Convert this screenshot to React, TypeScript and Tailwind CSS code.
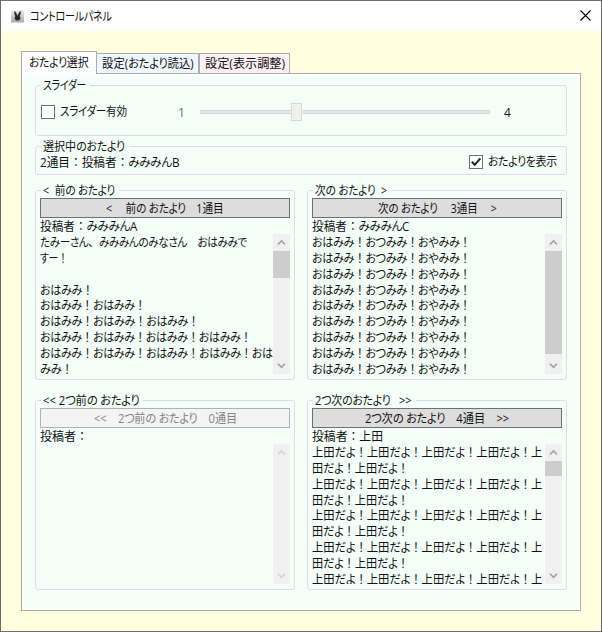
import { useLayoutEffect, useRef, type ReactNode } from 'react';

function Txt({ children, w, className = '' }: { children: string; w: number; className?: string }) {
  const inner = useRef<HTMLSpanElement>(null);
  useLayoutEffect(() => {
    const el = inner.current;
    if (el && el.offsetWidth) el.style.transform = `scaleX(${w / el.offsetWidth})`;
  }, [w]);
  const runs = children.match(/[\u3041-\u30ff]+|[^\u3041-\u30ff]+/g) ?? [];
  return (
    <span className={`inline-block whitespace-pre ${className}`} style={{ width: w }}>
      <span ref={inner} className="inline-block origin-left whitespace-pre">
        {runs.map((r, i) => (
          <span key={i} className={/[\u3041-\u30ff]/.test(r) ? "tracking-[-0.4px] [font-feature-settings:'palt']" : ''}>
            {r}
          </span>
        ))}
      </span>
    </span>
  );
}

function Group({ title, w, className = '', children }: { title: string; w: number; className?: string; children: ReactNode }) {
  return (
    <section className={`relative rounded-[3px] border border-[#d9dce6] shadow-[0_0_0_1px_#fafffd] ${className}`}>
      <h2 className="absolute left-[5px] -top-[8px] flex h-[15px] bg-[#f5fffa] pl-[2px] pr-1 leading-4">
        <Txt w={w}>{title}</Txt>
      </h2>
      {children}
    </section>
  );
}

function Arrow({ up, color }: { up?: boolean; color: string }) {
  return (
    <svg width="17" height="17" viewBox="0 0 17 17" fill="none" stroke={color} strokeWidth="1.6" className="shrink-0">
      <path d={up ? 'M5 10.5 L8.5 7 L12 10.5' : 'M5 6.8 L8.5 10.3 L12 6.8'} />
    </svg>
  );
}

function ScrollBar({ thumb }: { thumb: number }) {
  const color = thumb ? '#a0a0a0' : '#d2d2d2';
  return (
    <div className="flex w-[17px] shrink-0 flex-col bg-[#f0f0f0]">
      <Arrow up color={color} />
      <div className="flex-1">
        <div className="bg-[#cdcdcd]" style={{ height: thumb }} />
      </div>
      <Arrow color={color} />
    </div>
  );
}

type Line = [string, number];

function Letter(p: { title: Line; button: Line; author: Line; lines: Line[]; thumb: number; disabled?: boolean }) {
  return (
    <Group title={p.title[0]} w={p.title[1]} className="flex h-[190px] w-[260px] flex-col px-1 pt-[7px]">
      <button
        disabled={p.disabled}
        className={`flex h-5 shrink-0 items-center justify-center border pt-[2px] leading-4 ${
          p.disabled ? 'border-[#adb2b5] bg-[#f4f4f4] text-[#838383]' : 'border-[#707070] bg-[#dddddd]'
        }`}
      >
        <Txt w={p.button[1]}>{p.button[0]}</Txt>
      </button>
      <div className="flex h-4 shrink-0 pt-px leading-4">
        <Txt w={p.author[1]}>{p.author[0]}</Txt>
      </div>
      <div className="flex h-[140px]">
        <div className="flex-1 overflow-hidden pt-px">
          {p.lines.map(([s, w], i) => (
            <div key={i} className="flex h-[15.85px] leading-4">
              {s && <Txt w={w}>{s}</Txt>}
            </div>
          ))}
        </div>
        <ScrollBar thumb={p.thumb} />
      </div>
    </Group>
  );
}

function Check({ checked }: { checked?: boolean }) {
  return (
    <span className="flex h-[14px] w-[14px] shrink-0 border border-[#707070] bg-white">
      {checked && (
        <svg width="12" height="12" viewBox="0 0 12 12" fill="none" stroke="#212121" strokeWidth="2">
          <path d="M1.8 5.8 L4.7 8.8 L10.4 2.4" />
        </svg>
      )}
    </span>
  );
}

const previous: Line[] = [
  ['たみーさん、みみみんのみなさん　おはみみで', 207],
  ['すー！', 28],
  ['', 0],
  ['おはみみ！', 53],
  ['おはみみ！おはみみ！', 106],
  ['おはみみ！おはみみ！おはみみ！', 159],
  ['おはみみ！おはみみ！おはみみ！おはみみ！', 212],
  ['おはみみ！おはみみ！おはみみ！おはみみ！おは', 232.5],
  ['みみ！', 33],
];
const next: Line[] = Array.from({ length: 9 }, (): Line => ['おはみみ！おつみみ！おやみみ！', 159]);
const afterNext: Line[] = Array.from({ length: 9 }, (_, i): Line =>
  i % 2 ? ['田だよ！上田だよ！', 97] : ['上田だよ！上田だよ！上田だよ！上田だよ！上', 230],
);

export default function App() {
  return (
    <div className="flex h-[632px] w-[602px] flex-col border border-[#6d6b6e] bg-[#ffffe0] font-['Open_Sans','Noto_Sans_CJK_JP',sans-serif] text-[12px] text-[#111]">
      <header className="flex h-[30px] shrink-0 items-center bg-white pl-[10px] pr-[10px]">
        <svg width="13" height="13" viewBox="0 0 13 13" className="mr-[6px]">
          <defs>
            <linearGradient id="tile" x1="0" y1="0" x2="0" y2="1">
              <stop offset="0" stopColor="#ededed" />
              <stop offset="1" stopColor="#a9a9a9" />
            </linearGradient>
          </defs>
          <rect width="13" height="12.5" rx="1" fill="url(#tile)" />
          <path d="M3.2 1.2 C5 1.6 5.6 3.5 6.1 5.2 L7 5.2 C7.4 3.5 8 1.6 9.8 1.2 C10 3.2 9.2 5 8.7 6.2 C10 7.6 9.6 10.4 6.6 10.6 C3.4 10.4 3.1 7.6 4.4 6.2 C3.8 5 3 3.2 3.2 1.2Z" fill="#282828" />
        </svg>
        <Txt w={82} className="pt-px">コントロールパネル</Txt>
        <svg width="11" height="11" viewBox="0 0 11 11" stroke="#000" strokeWidth="1.1" className="ml-auto -mt-px">
          <path d="M0.5 0.5 L10.5 10.5 M10.5 0.5 L0.5 10.5" />
        </svg>
      </header>

      <main className="flex flex-col pl-5 pt-5">
        <nav className="z-10 -mb-px flex h-[23px] items-end leading-4">
          <div className="flex h-[23px] w-[76px] justify-center border border-b-0 border-[#acacac] bg-white pt-[3px]">
            <Txt w={60}>おたより選択</Txt>
          </div>
          <div className="mb-px flex h-5 w-[102px] justify-center border border-b-0 border-l-0 border-[#acacac] bg-[#f0f8ff] pt-[2px]">
            <Txt w={92}>設定(おたより読込)</Txt>
          </div>
          <div className="mb-px flex h-5 w-[91px] justify-center border border-b-0 border-[#acacac] bg-[#fff0f5] pt-[2px]">
            <Txt w={80}>設定(表示調整)</Txt>
          </div>
        </nav>

        <div className="h-[538px] w-[560px] border border-[#acacac] bg-white p-[2px]">
          <div className="flex h-full flex-col bg-[#f5fffa] pl-[11px] pt-[9px]">
            <Group title="スライダー" w={43} className="flex h-[51px] w-[532px] pl-[5px] pt-[17px]">
              <div className="mt-[2px]">
                <Check />
              </div>
              <div className="ml-[5px] flex h-4 w-[118px] pt-px leading-4">
                <Txt w={67}>スライダー有効</Txt>
              </div>
              <span className="mt-[2px] w-[22px] leading-4 text-[#54748c]">1</span>
              <div className="flex h-[18px] w-[290px] items-center">
                <div className="h-1 w-[91px] border border-r-0 border-[#d6d6d6] bg-[#e7eaea]" />
                <div className="h-[18px] w-[11px] border border-[#d9d9d9] bg-[#f0f0f0]" />
                <div className="h-1 flex-1 border border-l-0 border-[#d6d6d6] bg-[#e7eaea]" />
              </div>
              <span className="ml-[14px] mt-[2px] leading-4">4</span>
            </Group>

            <Group title="選択中のおたより" w={82} className="mt-[10px] flex h-[29px] w-[532px] justify-between pl-1 pr-[9px] pt-2 leading-4">
              <Txt w={139}>2通目：投稿者：みみみんB</Txt>
              <div className="flex gap-[5px]">
                <Check checked />
                <Txt w={69} className="-mt-px">おたよりを表示</Txt>
              </div>
            </Group>

            <div className="mt-[15px] grid grid-cols-[260px_260px] gap-x-3 gap-y-5">
              <Letter title={['<  前の おたより', 72]} button={['<　 前の おたより　1通目', 118]} author={['投稿者：みみみんA', 97]} lines={previous} thumb={27} />
              <Letter title={['次の おたより  >', 72]} button={['次の おたより　 3通目　 >', 119]} author={['投稿者：みみみんC', 97]} lines={next} thumb={103} />
              <Letter title={['<< 2つ前の おたより', 96]} button={['<<　2つ前の おたより　0通目', 143]} author={['投稿者：', 48]} lines={[]} thumb={0} disabled />
              <Letter title={['2つ次のおたより   >>', 97]} button={['2つ次の おたより　4通目　>>', 144]} author={['投稿者：上田', 71]} lines={afterNext} thumb={15} />
            </div>
          </div>
        </div>
      </main>
    </div>
  );
}
